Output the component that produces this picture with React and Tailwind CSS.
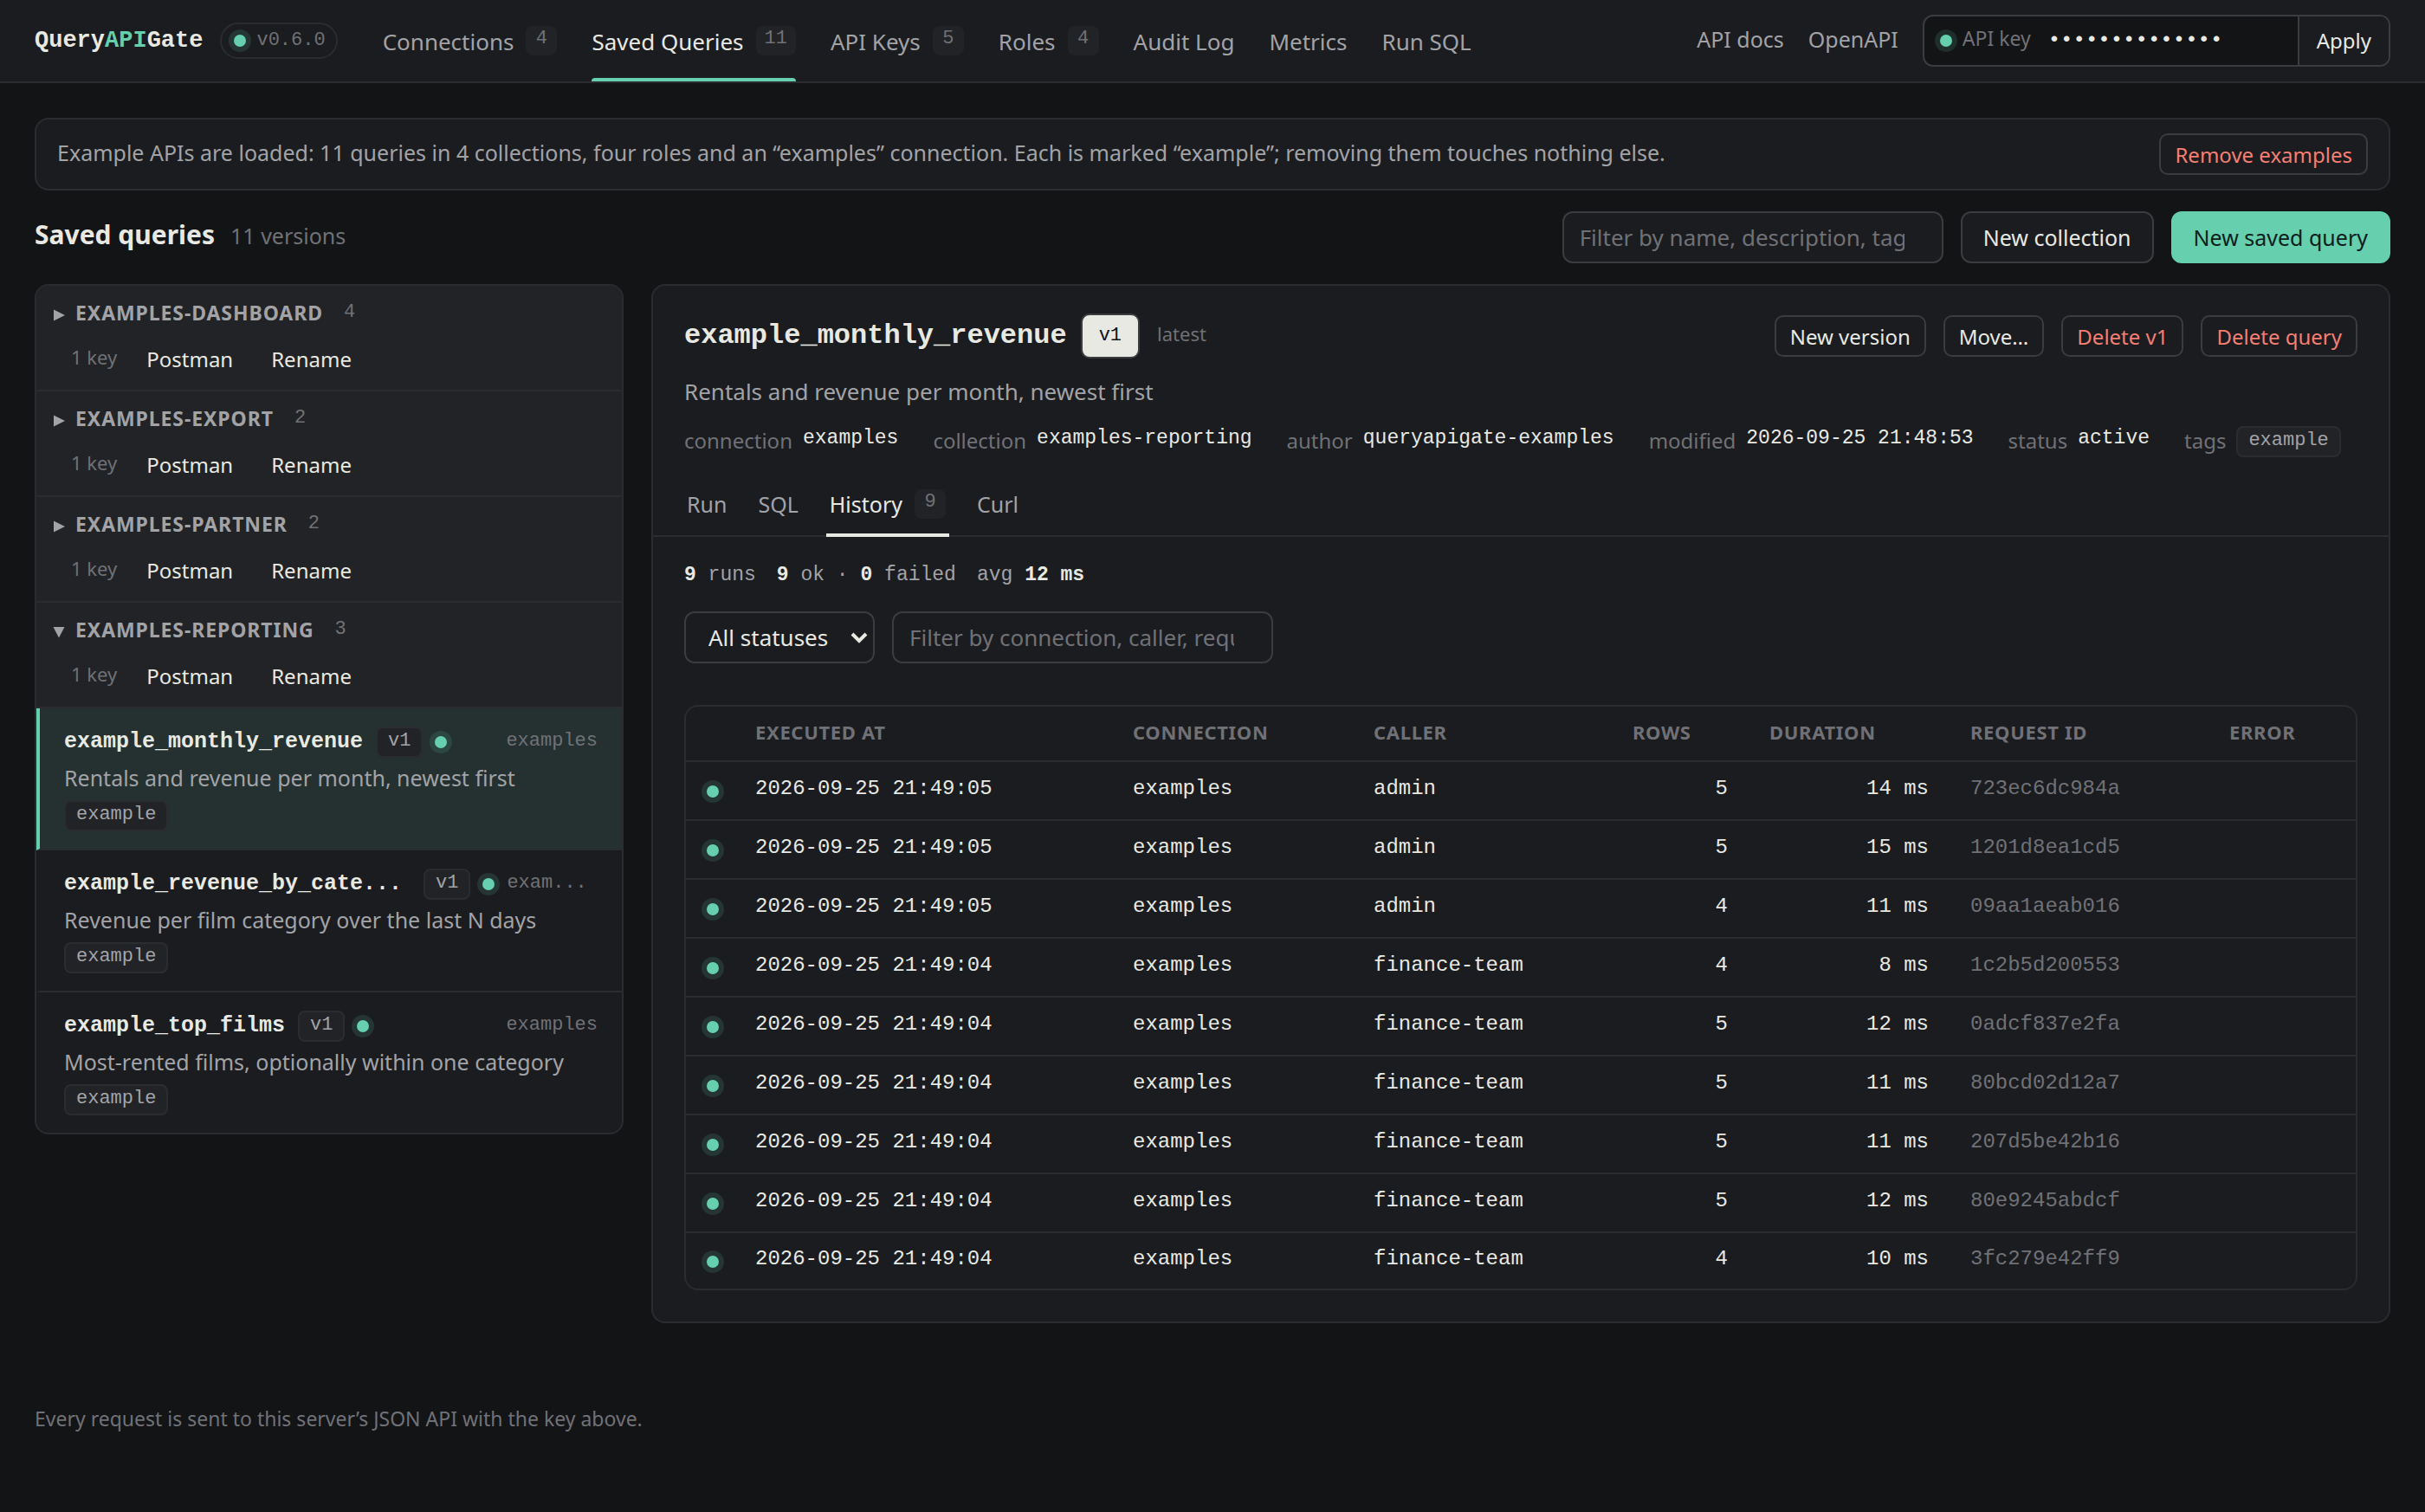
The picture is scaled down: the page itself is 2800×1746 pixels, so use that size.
import React from "react";

const mono = "font-['Liberation_Mono',monospace]";

function Dot() {
  return <span className="size-[14px] shrink-0 rounded-full bg-[#65cfae] shadow-[0_0_0_6px_rgba(101,207,174,0.14)]" />;
}

function Badge({ children }) {
  return (
    <span className={`${mono} flex h-[34px] min-w-9 items-center justify-center rounded-lg bg-[#222326] px-[10px] pb-1 text-[22px] leading-none text-[#707176]`}>
      {children}
    </span>
  );
}

function Chip({ children }) {
  return (
    <span className="flex h-9 w-fit shrink-0 items-center rounded-lg border-2 border-[#2b2c30] bg-[#222326] px-3 pb-[2px] font-['Liberation_Mono',monospace] text-[22px] leading-none text-[#a2a3a7]">
      {children}
    </span>
  );
}

function SmallButton({ danger, children }) {
  return (
    <button
      type="button"
      className={`h-12 shrink-0 rounded-[10px] border-2 border-[#3b3c40] px-4 pt-[2px] text-2xl leading-none ${danger ? "text-[#f57f72]" : "text-[#e8e9e3]"}`}
    >
      {children}
    </button>
  );
}

const nav = [
  { label: "Connections", count: 4 },
  { label: "Saved Queries", count: 11, active: true },
  { label: "API Keys", count: 5 },
  { label: "Roles", count: 4 },
  { label: "Audit Log" },
  { label: "Metrics" },
  { label: "Run SQL" },
];

function Header() {
  return (
    <header className="flex h-24 items-center border-b-2 border-[#2b2c30] bg-[#1b1c1f] px-10">
      <div className={`${mono} text-[27px] leading-none font-bold text-[#e8e9e3]`}>
        Query<span className="text-[#65cfae]">API</span>Gate
      </div>
      <div className={`${mono} ml-5 flex h-[42px] items-center gap-3 rounded-full border-2 border-[#2b2c30] pr-3 pl-[14px] text-[22px] leading-none text-[#707176]`}>
        <Dot />
        v0.6.0
      </div>
      <nav className="ml-8 flex self-stretch">
        {nav.map((n) => (
          <a
            key={n.label}
            href="#"
            aria-current={n.active ? "page" : undefined}
            className={`relative flex items-center gap-[14px] px-5 text-[26px] leading-none whitespace-nowrap ${n.active ? "text-[#e8e9e3]" : "text-[#a2a3a7]"}`}
          >
            <span className="pt-[2px]">{n.label}</span>
            {n.count && <Badge>{n.count}</Badge>}
            {n.active && <span className="absolute inset-x-5 bottom-0 h-1 rounded-t bg-[#65cfae]" />}
          </a>
        ))}
      </nav>
      <div className="ml-auto flex items-center gap-7 text-[25px] leading-none text-[#a2a3a7]">
        <a href="#" className="pb-1">API docs</a>
        <a href="#" className="pb-1">OpenAPI</a>
        <form className="flex h-[60px] overflow-hidden rounded-xl border-2 border-[#3b3c40] bg-[#131416]" onSubmit={(e) => e.preventDefault()}>
          <div className="flex items-center gap-3 pl-[18px]">
            <Dot />
            <label htmlFor="key" className="pb-[6px] text-[23px] text-[#707176]">API key</label>
          </div>
          <input
            id="key"
            type="password"
            defaultValue="abcdefghijklmn"
            className={`${mono} w-[308px] bg-transparent px-5 pb-[2px] text-2xl leading-none text-[#e8e9e3] outline-none`}
          />
          <button type="submit" className="border-l-2 border-[#3b3c40] bg-[#1b1c1f] px-5 text-2xl leading-none text-[#e8e9e3]">Apply</button>
        </form>
      </div>
    </header>
  );
}

const groups = [
  { name: "EXAMPLES-DASHBOARD", count: 4 },
  { name: "EXAMPLES-EXPORT", count: 2 },
  { name: "EXAMPLES-PARTNER", count: 2 },
  { name: "EXAMPLES-REPORTING", count: 3, open: true },
];

const items = [
  { name: "example_monthly_revenue", desc: "Rentals and revenue per month, newest first", conn: "examples", active: true },
  { name: "example_revenue_by_cate...", desc: "Revenue per film category over the last N days", conn: "exam...", wide: true },
  { name: "example_top_films", desc: "Most-rented films, optionally within one category", conn: "examples" },
];

function Sidebar() {
  return (
    <aside className="w-[680px] shrink-0 overflow-hidden rounded-2xl border-2 border-[#2b2c30] bg-[#1b1c1f]">
      {groups.map((g) => (
        <section key={g.name} className="h-[122px] border-b-2 border-[#2b2c30] bg-[#222326] px-[18px] pt-[13px]">
          <button type="button" aria-expanded={!!g.open} className="flex h-9 items-center text-[23px] leading-none font-bold tracking-[0.04em] text-[#a2a3a7]">
            <svg viewBox="0 0 14 14" className="mt-[6px] mr-3 ml-px size-[14px] fill-current" aria-hidden="true">
              {g.open ? <path d="M0.5 1H13.5L7 13.5Z" /> : <path d="M1 0.5V13.5L14 7Z" />}
            </svg>
            <span>{g.name}</span>
            <span className={`${mono} pl-6 text-[22px] font-normal tracking-normal text-[#707176]`}>{g.count}</span>
          </button>
          <div className="mt-3 flex h-12 items-center pl-[22px] text-2xl leading-none text-[#e8e9e3]">
            <span className="pb-[6px] text-[22px] text-[#707176]">1 key</span>
            <button type="button" className="ml-4 h-12 px-[18px]">Postman</button>
            <button type="button" className="ml-2 h-12 px-[18px]">Rename</button>
          </div>
        </section>
      ))}
      {items.map((it) => (
        <a
          key={it.name}
          href="#"
          className={`block border-b-2 border-l-4 border-b-[#2b2c30] py-5 pr-7 pl-7 last:border-b-0 ${it.active ? "border-l-[#65cfae] bg-[#243130]" : "border-l-transparent"}`}
        >
          <span className="flex h-[38px] items-center">
            <span className={`${mono} pb-[2px] text-[25px] leading-none font-bold text-[#e8e9e3] ${it.wide ? "w-[400px]" : ""}`}>{it.name}</span>
            <span className="mr-[14px] ml-[15px]">
              <Chip>v1</Chip>
            </span>
            <Dot />
            <span className={`${mono} pb-[2px] text-[22px] leading-none text-[#707176] ${it.wide ? "pl-[14px]" : "ml-auto"}`}>{it.conn}</span>
          </span>
          <span className="mt-1 block text-[25px] leading-9 whitespace-nowrap text-[#a2a3a7]">{it.desc}</span>
          <span className="mt-2 block">
            <Chip>example</Chip>
          </span>
        </a>
      ))}
    </aside>
  );
}

const meta = [
  ["connection", "examples"],
  ["collection", "examples-reporting"],
  ["author", "queryapigate-examples"],
  ["modified", "2026-09-25 21:48:53"],
  ["status", "active"],
];

const tabs = [{ label: "Run" }, { label: "SQL" }, { label: "History", count: 9, active: true }, { label: "Curl" }];

const runs = [
  ["2026-09-25 21:49:05", "admin", 5, "14 ms", "723ec6dc984a"],
  ["2026-09-25 21:49:05", "admin", 5, "15 ms", "1201d8ea1cd5"],
  ["2026-09-25 21:49:05", "admin", 4, "11 ms", "09aa1aeab016"],
  ["2026-09-25 21:49:04", "finance-team", 4, "8 ms", "1c2b5d200553"],
  ["2026-09-25 21:49:04", "finance-team", 5, "12 ms", "0adcf837e2fa"],
  ["2026-09-25 21:49:04", "finance-team", 5, "11 ms", "80bcd02d12a7"],
  ["2026-09-25 21:49:04", "finance-team", 5, "11 ms", "207d5be42b16"],
  ["2026-09-25 21:49:04", "finance-team", 5, "12 ms", "80e9245abdcf"],
  ["2026-09-25 21:49:04", "finance-team", 4, "10 ms", "3fc279e42ff9"],
];

function RunsTable() {
  return (
    <div className="mt-12 overflow-hidden rounded-2xl border-2 border-[#2b2c30]">
      <table className="w-full table-fixed text-left">
        <colgroup>
          <col className="w-[56px]" />
          <col className="w-[436px]" />
          <col className="w-[278px]" />
          <col className="w-[299px]" />
          <col className="w-[158px]" />
          <col className="w-[232px]" />
          <col className="w-[299px]" />
          <col className="w-[170px]" />
        </colgroup>
        <thead>
          <tr className="h-[63px] border-b-2 border-[#2b2c30] text-[22px] leading-none text-[#707176]">
            <th aria-label="Status" />
            {["EXECUTED AT", "CONNECTION", "CALLER", "ROWS", "DURATION", "REQUEST ID", "ERROR"].map((h) => (
              <th key={h} className="px-6 pb-1 font-bold tracking-[0.03em]">{h}</th>
            ))}
          </tr>
        </thead>
        <tbody className={`${mono} text-2xl leading-none text-[#e8e9e3]`}>
          {runs.map(([at, caller, rows, dur, id]) => (
            <tr key={id} className="h-[68px] border-b-2 border-[#2b2c30] last:h-[65px] last:border-b-0">
              <td className="pl-6">
                <span className="flex pt-[2px]"><Dot /></span>
              </td>
              <td className="px-6 pb-1">{at}</td>
              <td className="px-6 pb-1">examples</td>
              <td className="px-6 pb-1">{caller}</td>
              <td className="px-6 pb-1 text-right">{rows}</td>
              <td className="px-6 pb-1 text-right">{dur}</td>
              <td className="px-6 pb-1 text-[#707176]">{id}</td>
              <td />
            </tr>
          ))}
        </tbody>
      </table>
    </div>
  );
}

function Detail() {
  return (
    <main className="min-w-0 flex-1 rounded-2xl border-2 border-[#2b2c30] bg-[#1b1c1f]">
      <div className="px-9 pt-8">
        <div className="flex h-[52px] items-center gap-5">
          <div className="flex items-center gap-4">
            <h2 className={`${mono} text-[32px] leading-none font-bold text-[#e8e9e3]`}>example_monthly_revenue</h2>
            <button type="button" className={`${mono} h-[52px] rounded-[10px] border-2 border-[#3b3c40] bg-[#e8e9e3] px-[19px] text-[22px] leading-none text-[#131416]`}>v1</button>
          </div>
          <span className="pb-[6px] text-[22px] leading-none text-[#707176]">latest</span>
          <div className="ml-auto flex gap-5">
            <SmallButton>New version</SmallButton>
            <SmallButton>Move…</SmallButton>
            <SmallButton danger>Delete v1</SmallButton>
            <SmallButton danger>Delete query</SmallButton>
          </div>
        </div>
        <p className="mt-[18px] text-[26px] leading-10 text-[#a2a3a7]">Rentals and revenue per month, newest first</p>
        <dl className="mt-5 flex h-9 flex-wrap gap-x-10 text-2xl leading-[34px]">
          {meta.map(([k, v]) => (
            <div key={k} className="flex gap-3">
              <dt className="text-[#707176]">{k}</dt>
              <dd className={`${mono} text-[23px] leading-7 text-[#e8e9e3]`}>{v}</dd>
            </div>
          ))}
          <div className="flex gap-3">
            <dt className="text-[#707176]">tags</dt>
            <dd><Chip>example</Chip></dd>
          </div>
        </dl>
      </div>
      <div role="tablist" className="mt-6 flex h-[68px] gap-7 border-b-2 border-[#2b2c30] px-[35px]">
        {tabs.map((t) => (
          <button
            key={t.label}
            type="button"
            role="tab"
            aria-selected={!!t.active}
            className={`-mb-[2px] flex items-center gap-[14px] border-b-4 px-1 pb-1 text-[25px] leading-none ${t.active ? "border-[#e8e9e3] text-[#e8e9e3]" : "border-transparent text-[#a2a3a7]"}`}
          >
            {t.label}
            {t.count && <Badge>{t.count}</Badge>}
          </button>
        ))}
      </div>
      <div className="px-9 pt-[30px] pb-9">
        <p className={`${mono} flex gap-6 text-[23px] leading-7 text-[#a2a3a7]`}>
          <span><b className="text-[#e8e9e3]">9</b> runs</span>
          <span><b className="text-[#e8e9e3]">9</b> ok · <b className="text-[#e8e9e3]">0</b> failed</span>
          <span>avg <b className="text-[#e8e9e3]">12 ms</b></span>
        </p>
        <div className="mt-7 flex gap-5">
          <div className="relative">
            <select aria-label="Status" className="h-[60px] w-[220px] appearance-none rounded-xl border-2 border-[#3b3c40] bg-[#1b1c1f] pl-[26px] text-[26px] leading-none text-[#e8e9e3]">
              <option>All statuses</option>
            </select>
            <svg viewBox="0 0 20 14" className="pointer-events-none absolute top-6 right-2 h-[14px] w-5 fill-none stroke-[#e8e9e3] stroke-[4]" aria-hidden="true">
              <path d="M2 2L10 10L18 2" />
            </svg>
          </div>
          <input
            type="search"
            aria-label="Filter runs"
            placeholder="Filter by connection, caller, request id"
            className="h-[60px] w-[440px] rounded-xl border-2 border-[#3b3c40] bg-[#1b1c1f] pr-[21px] pl-[18px] text-[26px] text-[#e8e9e3] placeholder:text-[#707176]"
          />
        </div>
        <RunsTable />
      </div>
    </main>
  );
}

export default function App() {
  return (
    <div className="min-h-screen bg-[#131416] font-['Noto_Sans',sans-serif] text-[#e8e9e3]">
      <Header />
      <div className="px-10 pt-10">
        <div className="flex items-center justify-between rounded-2xl border-2 border-[#2b2c30] bg-[#1b1c1f] px-6 py-4">
          <p className="pb-1 text-[25px] leading-9 text-[#a2a3a7]">
            Example APIs are loaded: 11 queries in 4 collections, four roles and an “examples” connection. Each is marked “example”; removing them touches nothing else.
          </p>
          <SmallButton danger>Remove examples</SmallButton>
        </div>
        <div className="mt-6 flex items-center gap-5">
          <div className="flex items-baseline gap-[18px] pb-[6px]">
            <h1 className="text-[30px] leading-none font-bold">Saved queries</h1>
            <span className="text-[25px] leading-none text-[#707176]">11 versions</span>
          </div>
          <input
            type="search"
            aria-label="Filter queries"
            placeholder="Filter by name, description, tags"
            className="ml-auto h-[60px] w-[440px] rounded-xl border-2 border-[#3b3c40] bg-[#1b1c1f] pr-[21px] pl-[18px] text-[26px] text-[#e8e9e3] placeholder:text-[#707176]"
          />
          <button type="button" className="h-[60px] rounded-xl border-2 border-[#3b3c40] bg-[#1b1c1f] px-6 text-[25px] leading-none">New collection</button>
          <button type="button" className="h-[60px] rounded-xl border-2 border-[#65cfae] bg-[#65cfae] px-6 text-[25px] leading-none text-[#10201a]">New saved query</button>
        </div>
        <div className="mt-6 flex items-start gap-8">
          <Sidebar />
          <Detail />
        </div>
        <footer className="py-[92px] text-[23px] leading-9 text-[#707176]">
          Every request is sent to this server’s JSON API with the key above.
        </footer>
      </div>
    </div>
  );
}
